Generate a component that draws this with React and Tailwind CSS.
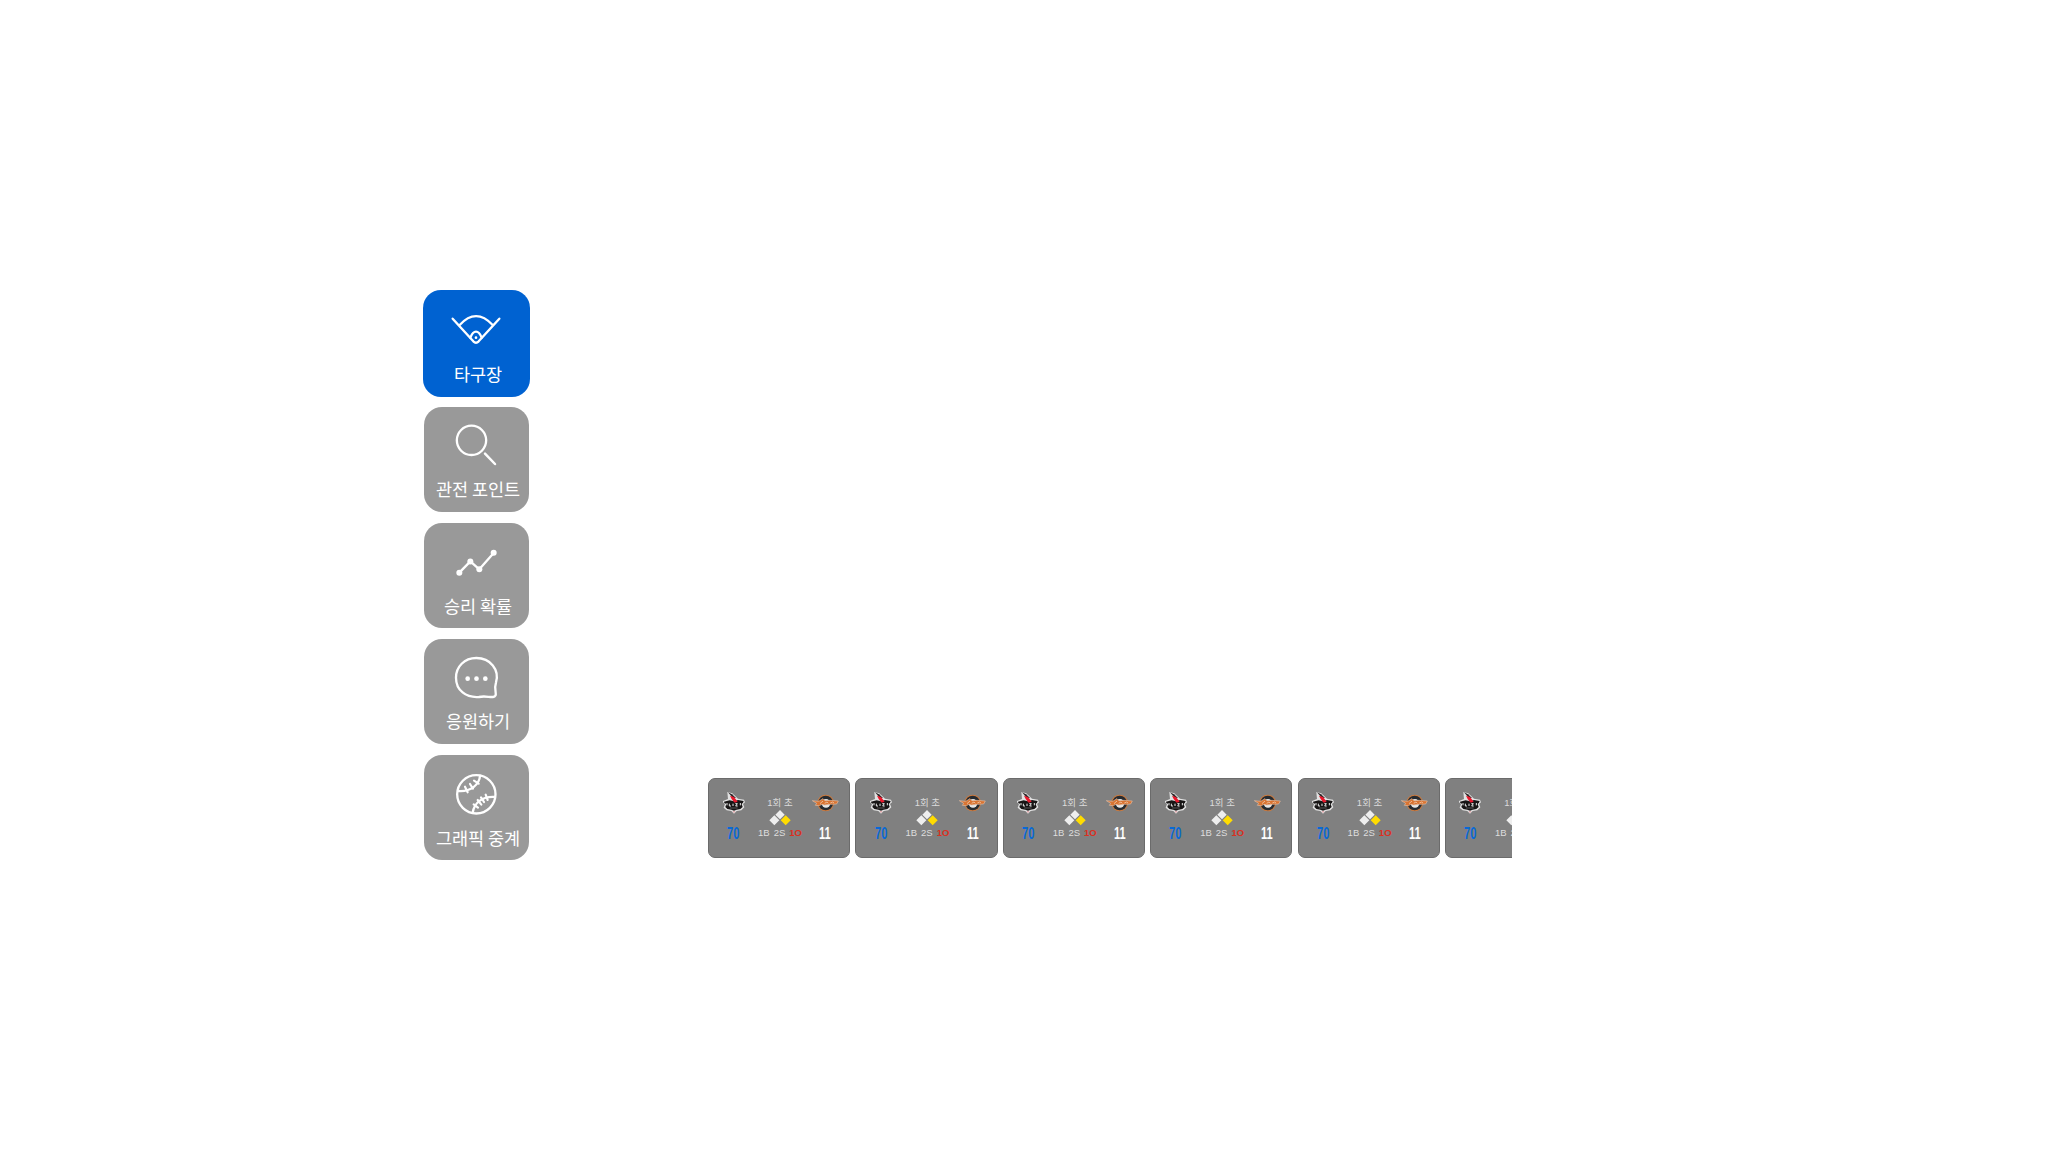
const stroke = { fill: "none", stroke: "#fff", strokeWidth: 7, strokeLinecap: "round", strokeLinejoin: "round" };

function FieldIcon() {
  return (
    <svg className="block h-[72px] w-[107px]" viewBox="39 30 321 216">
      <g {...stroke}>
        <path d="M128 116 L190 184 Q198 192 206 184 L268 116" />
        <path d="M149 135 Q198 82 248 135" />
        <path d="M181 173 Q188 155 198 155 Q208 155 215 173" />
      </g>
      <circle cx="198" cy="173" r="4" fill="#fff" />
    </svg>
  );
}

function SearchIcon() {
  return (
    <svg className="block h-[72px] w-[105px]" viewBox="42 21 315 216">
      <g {...stroke}>
        <circle cx="184.500" cy="121" r="44" />
        <path d="M225 161 L255 192" strokeWidth="7.500" />
      </g>
    </svg>
  );
}

function ChartIcon() {
  return (
    <svg className="block h-[72px] w-[105px]" viewBox="42 24 315 216">
      <path d="M148 173 L181 139 L208 163 L251 114" {...stroke} />
      <g fill="#fff">
        <circle cx="148" cy="173" r="9" />
        <circle cx="181" cy="139.500" r="9" />
        <circle cx="208" cy="163" r="9" />
        <circle cx="251" cy="113.500" r="9" />
      </g>
    </svg>
  );
}

function ChatIcon() {
  return (
    <svg className="block h-[72px] w-[105px]" viewBox="42 27 315 216">
      <path
        d="M199 84 C163 84 138 110 138 143 C138 181 168 204 207 201 C224 197 238 202 249 201 C257 200 258 195 257 188 C254 174 254 169 258 157 C269 119 241 84 199 84 Z"
        {...stroke}
      />
      <g fill="#fff">
        <circle cx="173" cy="146" r="7" />
        <circle cx="199.500" cy="146" r="7" />
        <circle cx="226" cy="146" r="7" />
      </g>
    </svg>
  );
}

function BallIcon() {
  return (
    <svg className="block h-[72px] w-[105px]" viewBox="42 21 315 216">
      <g {...stroke}>
        <circle cx="199" cy="139" r="57.500" />
        <path d="M210 84 C208 108 184 132 145 129" />
        <path d="M254 147 C219 145 193 162 188 194" />
        <path d="M165 116 L173 133 M180 108 L189 122 M192 98 L206 107" strokeWidth="6.500" />
        <path d="M191 169 L204 179 M203 156 L214 170 M227 140 L233 156 M213 148 L222 162" strokeWidth="6.500" />
      </g>
    </svg>
  );
}

const menu = [
  { label: "관전 포인트", Icon: SearchIcon, lift: "-mt-[2px]" },
  { label: "승리 확률", Icon: ChartIcon, lift: "-mt-[1px]" },
  { label: "응원하기", Icon: ChatIcon, lift: "-mt-[2px]" },
  { label: "그래픽 중계", Icon: BallIcon, lift: "-mt-[1px]" },
];

function WizLogo() {
  return (
    <svg className="block h-[22px] w-[24px]" viewBox="4 4 72 66">
      <path d="M7 31 L22 25 L20 4 L35 8 L52 24 L70 27 L73 35 L67 40 L71 50 L62 59 L48 61 L40 69 L32 61 L18 59 L9 51 L13 40 L7 35 Z" fill="#e2e2e2" />
      <path d="M10 33 L27 29 L40 32 L52 28 L69 31 L67 36 L63 40 L66 49 L59 55 L48 57 L40 60 L32 57 L20 55 L14 49 L17 40 L11 37 Z" fill="#171515" />
      <path d="M22 5 L34 11 L46 22 L36 21 Z" fill="#2c2728" />
      <path d="M28 15 L40 19 L51 33 L42 36 L33 25 Z" fill="#e9182c" />
      <path d="M19 37 V44 M26 39 V46 H31 M37 39 V46 M44 39 H50 L45 46 H51 M59 37 V44" fill="none" stroke="#e8e8e8" strokeWidth="3" />
      <path d="M28 52 H51" stroke="#777" strokeWidth="2" />
      <path d="M36 62 L40 67 L44 62 Z" fill="#e0969a" />
    </svg>
  );
}

function EaglesLogo() {
  return (
    <svg className="block h-[18px] w-[27px]" viewBox="0 0 81 54">
      <ellipse cx="41" cy="27" rx="25" ry="25" fill="#c9793f" />
      <ellipse cx="41" cy="27" rx="22" ry="22" fill="#272b30" />
      <ellipse cx="42" cy="28" rx="13" ry="13" fill="#e6e6e6" />
      <path d="M1 20 L20 22 L33 14 L39 20 L54 19 L79 21 L74 30 L56 31 L37 33 L30 31 L22 35 L10 34 L14 28 Z" fill="#d97432" stroke="#dfbda4" strokeWidth="2" />
      <path d="M24 29 L33 21 M38 28 L45 24 L49 28 M55 27 L62 24 L66 27" fill="none" stroke="#f0c7a6" strokeWidth="2.500" />
    </svg>
  );
}

function Bases() {
  return (
    <svg className="block h-[16px] w-[22px]" viewBox="0 0 66 48">
      <path d="M33 0 L47 14 L33 28 L19 14 Z M16 16 L31 31 L16 46 L1 31 Z" fill="#eee" />
      <path d="M50 16 L65 31 L50 46 L35 31 Z" fill="#ffdc00" />
    </svg>
  );
}

function ScoreCard() {
  return (
    <div className="flex h-[80px] w-[142.300px] shrink-0 rounded-[7px] border border-[#6b6b6b] bg-[#808080] font-['Liberation_Sans','Noto_Sans_CJK_KR',sans-serif]">
      <div className="flex w-[49px] flex-col items-center pt-[13px]">
        <WizLogo />
        <span className="mt-[10px] block origin-center scale-x-[0.670] text-[16.500px] leading-[18px] font-bold text-[#0869d8]">70</span>
      </div>
      <div className="flex w-[44px] flex-col items-center pt-[18px]">
        <span className="text-[9.500px] leading-[12px] whitespace-nowrap text-[#dcdcdc]">1회 초</span>
        <div className="mt-[1px]"><Bases /></div>
        <div className="mt-[1px] flex gap-[4px] text-[9.500px] leading-[12px] text-[#dedede]">
          <span>1B</span>
          <span>2S</span>
          <span className="font-bold text-[#dc2f20]">1O</span>
        </div>
      </div>
      <div className="flex w-[46px] flex-col items-center pt-[15px]">
        <EaglesLogo />
        <span className="mt-[12px] block origin-center scale-x-[0.670] text-[16.500px] leading-[18px] font-bold text-white">11</span>
      </div>
    </div>
  );
}

export default function App() {
  return (
    <main className="flex h-[1152px] w-[2048px] overflow-hidden bg-white pl-[423px] font-['Noto_Sans_CJK_KR',sans-serif]">
      <nav className="flex w-[107px] flex-col items-center pt-[290px]">
        <button className="flex h-[107px] w-[107px] shrink-0 flex-col items-center rounded-[18px] bg-[#0062d1]">
          <FieldIcon />
          <span className="pl-[3px] text-[17.500px] leading-[24px] font-normal tracking-[-0.100px] whitespace-nowrap text-white">타구장</span>
        </button>
        <div className="mt-[10px] flex flex-col gap-[11px]">
          {menu.map(({ label, Icon, lift }) => (
            <button key={label} className="flex h-[105px] w-[105px] flex-col items-center rounded-[18px] bg-[#999999]">
              <Icon />
              <span className={`${lift} pl-[3px] text-[17.500px] leading-[24px] font-normal tracking-[-0.100px] whitespace-nowrap text-white`}>{label}</span>
            </button>
          ))}
        </div>
      </nav>
      <section className="ml-[178px] flex h-[858px] w-[804px] items-end gap-[5.100px] overflow-hidden">
        {[1, 2, 3, 4, 5, 6].map((game) => <ScoreCard key={game} />)}
      </section>
    </main>
  );
}
